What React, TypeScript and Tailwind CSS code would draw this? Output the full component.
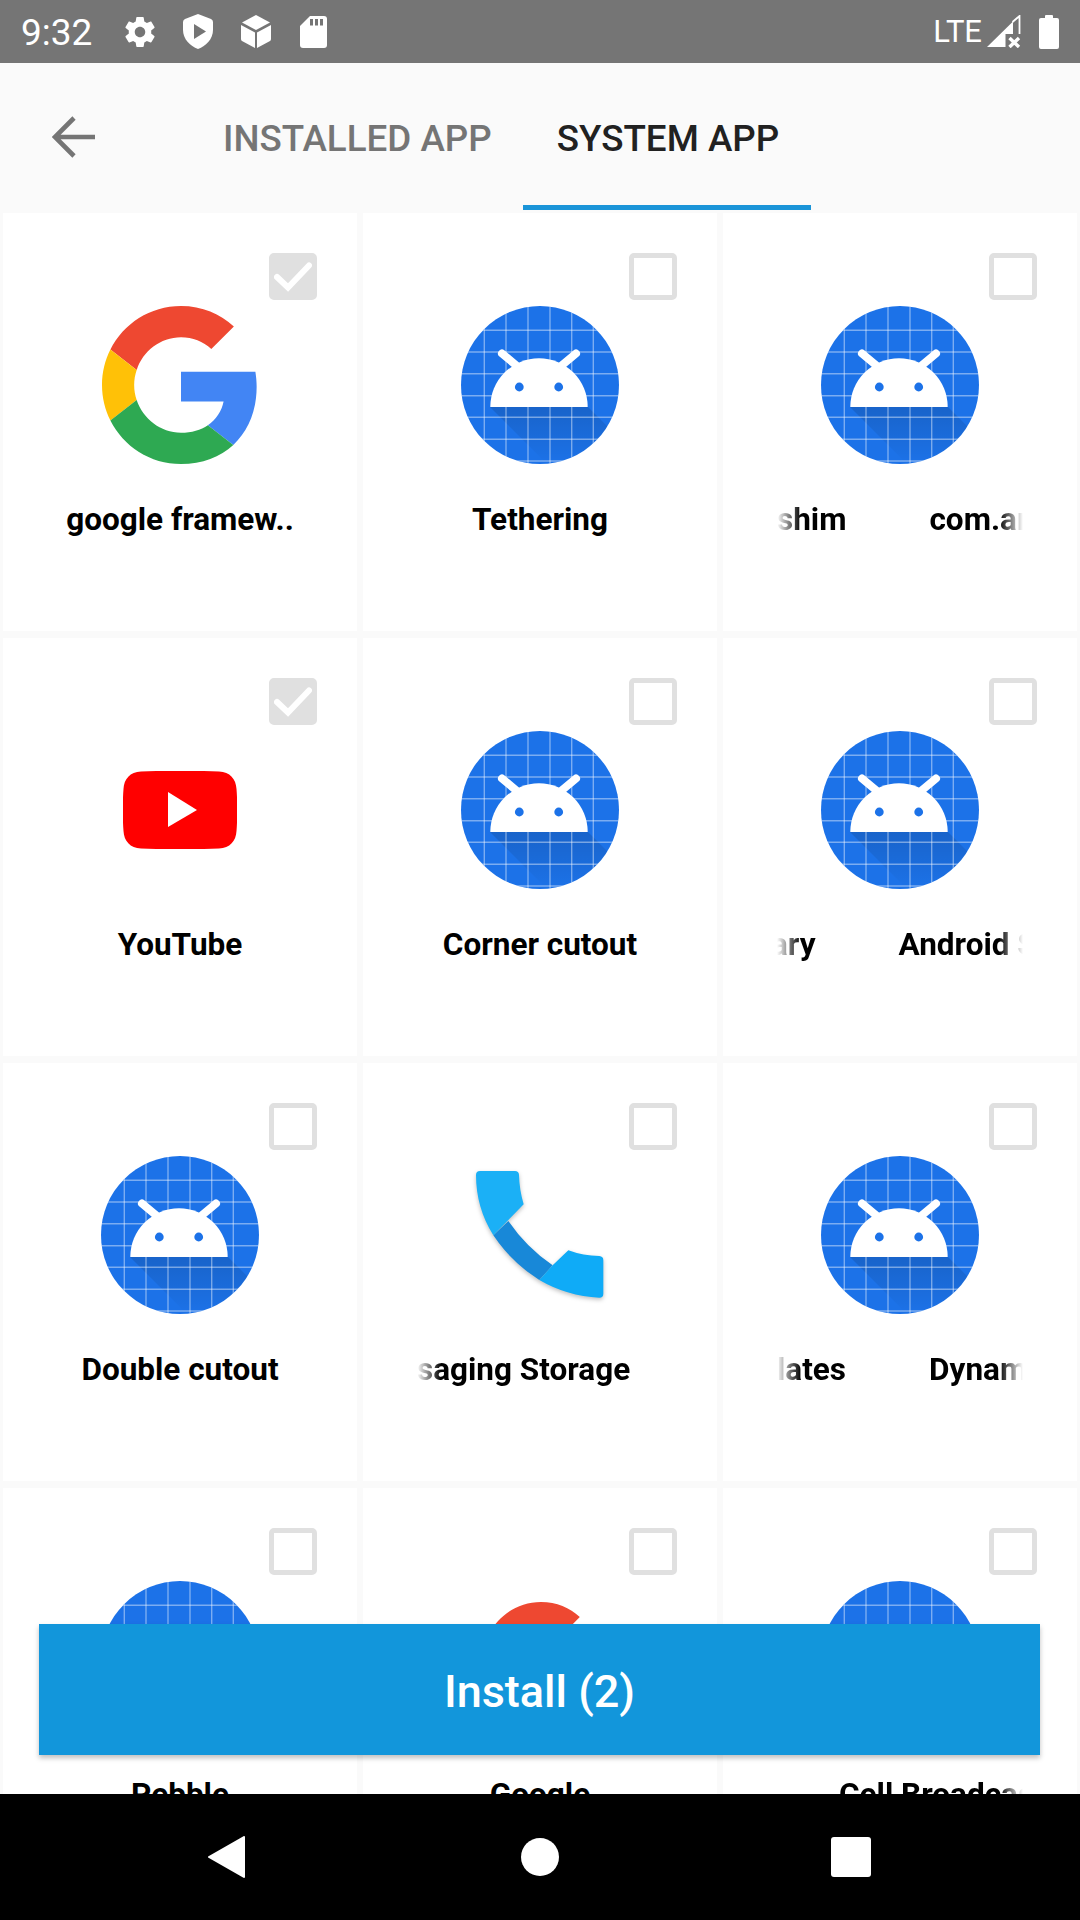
import React from "react";

const Gear = () => (
  <svg width="36" height="36" viewBox="0 0 24 24" fill="#fff" className="ml-[29px] shrink-0">
    <path d="M19.43 12.98c.04-.32.07-.64.07-.98s-.03-.66-.07-.98l2.11-1.65c.19-.15.24-.42.12-.64l-2-3.46c-.12-.22-.39-.3-.61-.22l-2.49 1c-.52-.4-1.08-.73-1.69-.98l-.38-2.65C14.46 2.18 14.25 2 14 2h-4c-.25 0-.46.18-.49.42l-.38 2.65c-.61.25-1.17.59-1.69.98l-2.49-1c-.23-.09-.49 0-.61.22l-2 3.46c-.13.22-.07.49.12.64l2.11 1.65c-.04.32-.07.65-.07.98s.03.66.07.98l-2.11 1.65c-.19.15-.24.42-.12.64l2 3.46c.12.22.39.3.61.22l2.49-1c.52.4 1.08.73 1.69.98l.38 2.65c.03.24.24.42.49.42h4c.25 0 .46-.18.49-.42l.38-2.65c.61-.25 1.17-.59 1.69-.98l2.49 1c.23.09.49 0 .61-.22l2-3.46c.12-.22.07-.49-.12-.64l-2.11-1.65zM12 15.5c-1.93 0-3.5-1.57-3.5-3.5s1.57-3.5 3.5-3.5 3.5 1.57 3.5 3.5-1.57 3.5-3.5 3.5z" />
  </svg>
);
const Shield = () => (
  <svg width="30" height="35" viewBox="0 0 30 35" className="ml-[25px] shrink-0">
    <path d="M15 0 L28 5 Q30 6 30 8 V16 C30 25 23 32 15 35 C7 32 0 25 0 16 V8 Q0 6 2 5 Z" fill="#fff" />
    <path d="M11 10 L23 17.5 L11 25 Z" fill="#757575" />
  </svg>
);
const Cube = () => (
  <svg width="30" height="33" viewBox="0 0 30 33" fill="#fff" className="ml-[28px] shrink-0">
    <path d="M15 0 L29 7.5 L15 15 L1 7.5 Z" />
    <path d="M0 10 L14 17.5 V33 L1 26 Q0 25.5 0 24 Z" />
    <path d="M30 10 L16 17.5 V33 L29 26 Q30 25.5 30 24 Z" />
  </svg>
);
const Sd = () => (
  <svg width="27" height="32" viewBox="0 0 27 32" className="ml-[29px] shrink-0">
    <path d="M10 0 H24 a3 3 0 0 1 3 3 V29 a3 3 0 0 1-3 3 H3 a3 3 0 0 1-3-3 V10 Z" fill="#fff" />
    <rect x="10" y="3" width="3" height="6.5" fill="#757575" />
    <rect x="15" y="3" width="3" height="6.5" fill="#757575" />
    <rect x="20" y="3" width="3" height="6.5" fill="#757575" />
  </svg>
);
const Signal = () => (
  <svg width="34" height="33" viewBox="0 0 34 33" className="ml-[5px] shrink-0">
    <path d="M0 32 L26 6.5 V19 H18.5 V32 Z" fill="#fff" />
    <path d="M25.5 7 L32.5 1 V19" fill="none" stroke="#fff" strokeWidth="1.8" />
    <path d="M22.5 23 L32 32 M32 23 L22.5 32" stroke="#fff" strokeWidth="3.4" />
  </svg>
);
const Battery = () => (
  <svg width="20" height="34" viewBox="0 0 20 34" className="ml-[18px] shrink-0">
    <path d="M6 1 a1 1 0 0 1 1-1 H13 a1 1 0 0 1 1 1 V3 H18 a2 2 0 0 1 2 2 V32 a2 2 0 0 1-2 2 H2 a2 2 0 0 1-2-2 V5 a2 2 0 0 1 2-2 H6 Z" fill="#fff" />
  </svg>
);

const Check = ({ checked }: { checked: boolean }) => (
  <div
    className={
      "mt-[40px] mr-[40px] h-[47px] w-[48px] shrink-0 self-end rounded-[5px] border-[5px] border-[#e0e0e0] " +
      (checked ? "bg-[#e0e0e0]" : "bg-white")
    }
  >
    {checked && (
      <svg width="38" height="37" viewBox="0 0 38 37">
        <path d="M3 19 L14 29.5 L35 7.5" fill="none" stroke="#fff" strokeWidth="6" strokeLinecap="round" />
      </svg>
    )}
  </div>
);

const Android = () => (
  <svg width="158" height="158" viewBox="0 0 158 158">
    <defs>
      <clipPath id="androidCircle">
        <circle cx="79" cy="79" r="79" />
      </clipPath>
      <linearGradient id="androidShade" x1="0" y1="0" x2="0" y2="1">
        <stop offset="0" stopColor="#000" stopOpacity="0.13" />
        <stop offset="1" stopColor="#000" stopOpacity="0" />
      </linearGradient>
    </defs>
    <g clipPath="url(#androidCircle)">
      <rect width="158" height="158" fill="#1c72e8" />
      <path d="M29 101 H127 L158 132 V158 H86 Z" fill="url(#androidShade)" />
      <g stroke="#fff" strokeOpacity="0.42" strokeWidth="1.4">
        {[23.3, 45, 67, 89, 110.7, 132.3].map((x) => (
          <line key={x} x1={x} y1="0" x2={x} y2="158" />
        ))}
        {[24.3, 46, 67.7, 89.7, 111.3, 133.3, 155].map((y) => (
          <line key={y} x1="0" y1={y} x2="158" y2={y} />
        ))}
      </g>
    </g>
    <path d="M41 47.5 L56 60 M115 47.5 L100 60" stroke="#fff" strokeWidth="8" strokeLinecap="round" />
    <path d="M29.3 101 a48.7 48.7 0 0 1 97.4 0 Z" fill="#fff" />
    <circle cx="58.3" cy="81" r="4.4" fill="#1c72e8" />
    <circle cx="97.7" cy="81" r="4.4" fill="#1c72e8" />
  </svg>
);

const GoogleG = ({ size }: { size: number }) => (
  <svg width={size} height={size} viewBox="0 0 48 48" className="ml-[2px] shrink-0">
    <path fill="#EE4831" d="M24 9.5c3.54 0 6.71 1.22 9.21 3.6l6.85-6.85C35.9 2.38 30.47 0 24 0 14.62 0 6.51 5.38 2.56 13.22l7.98 6.19C12.43 13.72 17.74 9.5 24 9.5z" />
    <path fill="#4285F4" d="M46.98 24.55c0-1.57-.15-3.09-.38-4.55H24v9.02h12.94c-.58 2.96-2.26 5.48-4.78 7.18l7.73 6c4.51-4.18 7.09-10.36 7.09-17.65z" />
    <path fill="#FFC107" d="M10.53 28.59c-.48-1.45-.76-2.99-.76-4.59s.27-3.14.76-4.59l-7.98-6.19C.92 16.46 0 20.12 0 24c0 3.88.92 7.54 2.56 10.78l7.97-6.19z" />
    <path fill="#2EA952" d="M24 48c6.48 0 11.93-2.13 15.89-5.81l-7.73-6c-2.15 1.45-4.92 2.3-8.16 2.3-6.26 0-11.57-4.22-13.47-9.91l-7.98 6.19C6.51 42.62 14.62 48 24 48z" />
  </svg>
);

const YouTube = () => (
  <svg width="114" height="78" viewBox="0 0 114 78">
    <path d="M18 0.5 C40 -0.5 74 -0.5 96 0.5 C107 1 113 8 113.5 18 C114.5 30 114.5 48 113.5 60 C113 70 107 77 96 77.5 C74 78.5 40 78.5 18 77.5 C7 77 1 70 0.5 60 C-0.5 48 -0.5 30 0.5 18 C1 8 7 1 18 0.5 Z" fill="#ff0000" />
    <path d="M45 21 L74 39 L45 56 Z" fill="#fff" />
  </svg>
);

const Phone = () => (
  <svg width="128" height="128" viewBox="108 95 384 384" className="drop-shadow-[0_2px_2px_rgba(0,0,0,0.25)]">
    <path d="M205 245 Q260 325 338 378 L298 422 Q215 370 160 288 Z" fill="#1888d8" />
    <path d="M120 95 H225 Q236 95 237 106 Q238 150 251 195 L160 288 Q108 205 108 107 Q108 95 120 95 Z" fill="#1bb0f6" />
    <path d="M338 378 L385 333 Q430 350 478 350 Q490 351 490 363 V463 Q490 475 478 475 Q380 470 298 422 Z" fill="#0fabf7" />
  </svg>
);

type Item = {
  icon: React.ReactNode;
  label: string;
  checked?: boolean;
  marquee?: { first: string; second?: string; fade: string; firstClass?: string };
};

const items: Item[] = [
  { icon: <GoogleG size={158} />, label: "google framew..", checked: true },
  { icon: <Android />, label: "Tethering" },
  { icon: <Android />, label: "", marquee: { first: "shim", second: "com.android.cts.ctsshim", fade: "both" } },
  { icon: <YouTube />, label: "YouTube", checked: true },
  { icon: <Android />, label: "Corner cutout" },
  { icon: <Android />, label: "", marquee: { first: "ary", second: "Android Shared Library", fade: "both", firstClass: "-ml-[6px]" } },
  { icon: <Android />, label: "Double cutout" },
  { icon: <Phone />, label: "", marquee: { first: "saging Storage", fade: "left" } },
  { icon: <Android />, label: "", marquee: { first: "lates", second: "Dynamic Templates", fade: "both" } },
  { icon: <Android />, label: "Pebble" },
  { icon: <GoogleG size={116} />, label: "Google" },
  { icon: <Android />, label: "", marquee: { first: "Cell Broadcast Service", fade: "right", firstClass: "ml-[62px]" } },
];

const Label = ({ item }: { item: Item }) => {
  const m = item.marquee;
  if (!m) {
    return <div className="mt-[37px] whitespace-nowrap text-center leading-[38px]">{item.label}</div>;
  }
  const mask =
    m.fade === "both"
      ? "[mask-image:linear-gradient(to_right,transparent,#000_24px,#000_222px,transparent)]"
      : m.fade === "left"
        ? "[mask-image:linear-gradient(to_right,transparent,#000_24px)]"
        : "[mask-image:linear-gradient(to_left,transparent,#000_24px)]";
  return (
    <div className={"mt-[37px] flex w-[246px] gap-[83px] overflow-hidden whitespace-nowrap leading-[38px] " + mask}>
      <span className={m.firstClass}>{m.first}</span>
      {m.second && <span>{m.second}</span>}
    </div>
  );
};

export default function App() {
  return (
    <div className="flex h-[1920px] w-[1080px] flex-col overflow-hidden bg-[#fafafa] font-['Roboto',sans-serif]">
      <div className="flex h-[63px] shrink-0 items-center bg-[#757575] text-white">
        <span className="mt-[2px] ml-[21px] w-[72px] text-[37px] leading-none">9:32</span>
        <Gear />
        <Shield />
        <Cube />
        <Sd />
        <span className="ml-auto text-[31px] leading-none">LTE</span>
        <Signal />
        <Battery />
        <div className="w-[21px]" />
      </div>

      <div className="flex h-[150px] shrink-0 items-start">
        <svg width="44" height="44" viewBox="0 0 44 44" className="mt-[52px] ml-[52px] shrink-0">
          <path d="M43 22 H4 M22 3 L3 22 L22 41" fill="none" stroke="#757575" strokeWidth="4.6" />
        </svg>
        <div className="ml-[127px] flex h-[147px] items-center">
          <div className="w-[300px] pt-[4px] text-[36.75px] font-medium whitespace-nowrap text-[#757575]">INSTALLED APP</div>
          <div className="flex h-full w-[288px] items-center justify-center border-b-[5px] border-[#1a94d8] pt-[9px] pl-[2px] text-[36.75px] font-medium whitespace-nowrap text-[#212121]">
            SYSTEM APP
          </div>
        </div>
      </div>

      <div className="relative min-h-0 flex-1 overflow-hidden">
        <div className="grid grid-cols-[354px_354px_354px] gap-x-[6px] gap-y-[7px] pl-[3px]">
          {items.map((item, i) => (
            <div key={i} className="flex h-[418px] flex-col items-center bg-white text-[31.5px] font-bold text-black">
              <Check checked={!!item.checked} />
              <div className="mt-[6px] flex h-[158px] w-[158px] items-center justify-center">{item.icon}</div>
              <Label item={item} />
            </div>
          ))}
        </div>
        <button className="absolute top-[1411px] left-[39px] flex h-[131px] w-[1001px] items-center justify-center bg-[#1296db] pt-[5px] text-[45px] font-medium text-white shadow-[0_3px_5px_rgba(0,0,0,0.25)]">
          Install (2)
        </button>
      </div>

      <div className="flex h-[126px] shrink-0 items-center bg-black">
        <div className="ml-[207px] flex w-[314px] shrink-0">
          <svg width="38" height="42" viewBox="0 0 38 42">
            <path d="M37 1 V41 L2 21 Z" fill="#fff" stroke="#fff" strokeWidth="2" strokeLinejoin="round" />
          </svg>
        </div>
        <div className="h-[38px] w-[38px] shrink-0 rounded-full bg-white" />
        <div className="ml-[272px] h-[40px] w-[40px] shrink-0 rounded-[3px] bg-white" />
      </div>
    </div>
  );
}
